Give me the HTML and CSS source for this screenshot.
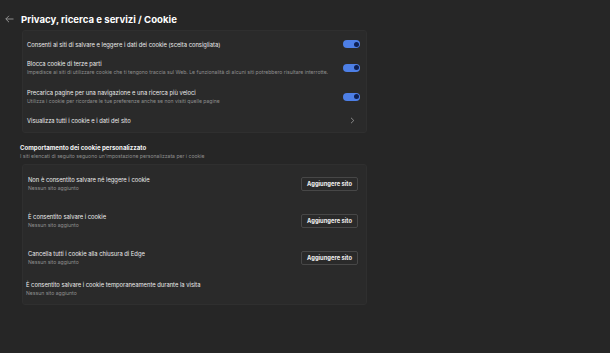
FILE: index.html
```html
<!DOCTYPE html>
<html>
<head>
    <title>Cookie</title>
    <link rel="stylesheet" href="styles.css">
</head>
<body>

<div class="page">
    <div class="header">
        <svg class="back" width="9" height="8" viewBox="0 0 9 8"><path d="M4 0.8 L0.8 4 L4 7.2 M0.8 4 H8.5" fill="none" stroke="#9a9a9a" stroke-width="0.9"/></svg>
        <h1>Privacy, ricerca e servizi / Cookie</h1>
    </div>

    <div class="card first">
        <div class="row r1">
            <div class="text"><div class="title">Consenti ai siti di salvare e leggere i dati dei cookie (scelta consigliata)</div></div>
            <span class="toggle"></span>
        </div>
        <div class="row r2">
            <div class="text">
                <div class="title">Blocca cookie di terze parti</div>
                <div class="sub">Impedisce ai siti di utilizzare cookie che ti tengono traccia sul Web. Le funzionalità di alcuni siti potrebbero risultare interrotte.</div>
            </div>
            <span class="toggle"></span>
        </div>
        <div class="row r3">
            <div class="text">
                <div class="title">Precarica pagine per una navigazione e una ricerca più veloci</div>
                <div class="sub">Utilizza i cookie per ricordare le tue preferenze anche se non visiti quelle pagine</div>
            </div>
            <span class="toggle"></span>
        </div>
        <div class="row r4">
            <div class="text"><div class="title">Visualizza tutti i cookie e i dati del sito</div></div>
            <svg class="chev" width="5" height="7" viewBox="0 0 5 7"><path d="M1 0.8 L3.8 3.5 L1 6.2" fill="none" stroke="#a0a0a0" stroke-width="0.8"/></svg>
        </div>
    </div>

    <div class="section">
        <div class="section-title">Comportamento dei cookie personalizzato</div>
        <div class="sub">I siti elencati di seguito seguono un'impostazione personalizzata per i cookie</div>
    </div>

    <div class="card second">
        <div class="row list">
            <div class="text">
                <div class="title">Non è consentito salvare né leggere i cookie</div>
                <div class="sub">Nessun sito aggiunto</div>
            </div>
            <button class="btn">Aggiungere sito</button>
        </div>
        <div class="row list">
            <div class="text">
                <div class="title">È consentito salvare i cookie</div>
                <div class="sub">Nessun sito aggiunto</div>
            </div>
            <button class="btn">Aggiungere sito</button>
        </div>
        <div class="row list">
            <div class="text">
                <div class="title">Cancella tutti i cookie alla chiusura di Edge</div>
                <div class="sub">Nessun sito aggiunto</div>
            </div>
            <button class="btn">Aggiungere sito</button>
        </div>
        <div class="row last">
            <div class="text">
                <div class="title">È consentito salvare i cookie temporaneamente durante la visita</div>
                <div class="sub">Nessun sito aggiunto</div>
            </div>
        </div>
    </div>
</div>

</body>
</html>
```

FILE: styles.css
```css
/* impostazioni edge, tema scuro */
body { margin: 0; background: #262626; font-family: Inter, "Noto Sans", sans-serif; color: #f2f2f2; }
.page { width: 345px; padding: 12px 0 0 22px; }

.header { display: flex; align-items: center; margin-left: -17px; height: 14px; }
.back { margin-right: 7px; }
h1 { margin: 0; font-size: 9.6px; font-weight: 700; color: #fff; }

.card {
    background: #2a2a2a; border: 1px solid #2f2f2f; border-radius: 3px;
}
.card.first { margin-top: 4px; padding: 3px 0 2px; }
.card.second { margin-top: 4px; }

.row { display: flex; align-items: center; justify-content: space-between; padding: 0 6px 0 4px; }
.title { font-size: 5.8px; line-height: 9px; color: #ececec; }
.sub { font-size: 5.1px; line-height: 8px; color: #8f8f8f; }

.r1 { height: 20px; }
.r2 { height: 27px; }
.r3 { height: 29px; padding-top: 1px; }
.r4 { height: 19px; }

.toggle {
    position: relative; width: 17px; height: 8px; border-radius: 5px;
    background: #4d7fe6; flex: none;
}
.toggle::after {
    content: ""; position: absolute; right: 1.5px; top: 1.5px;
    width: 5px; height: 5px; border-radius: 50%; background: #0d1f52;
}
.chev { margin-right: 5px; }

.section { padding: 10px 0 0 0; margin-left: -2px; }
.section-title { font-size: 6.1px; font-weight: 700; line-height: 9px; color: #f4f4f4; }

.list { height: 37px; padding: 0 8px 0 5px; }
.last { height: 28px; align-items: flex-start; padding: 4px 8px 0 3px; box-sizing: border-box; }

.btn {
    font-family: inherit; font-size: 5.8px; font-weight: 700; color: #f0f0f0;
    background: #2a2a2a; border: 1px solid #474747; border-radius: 2px;
    width: 57px; height: 14px; padding: 0;
}
```
